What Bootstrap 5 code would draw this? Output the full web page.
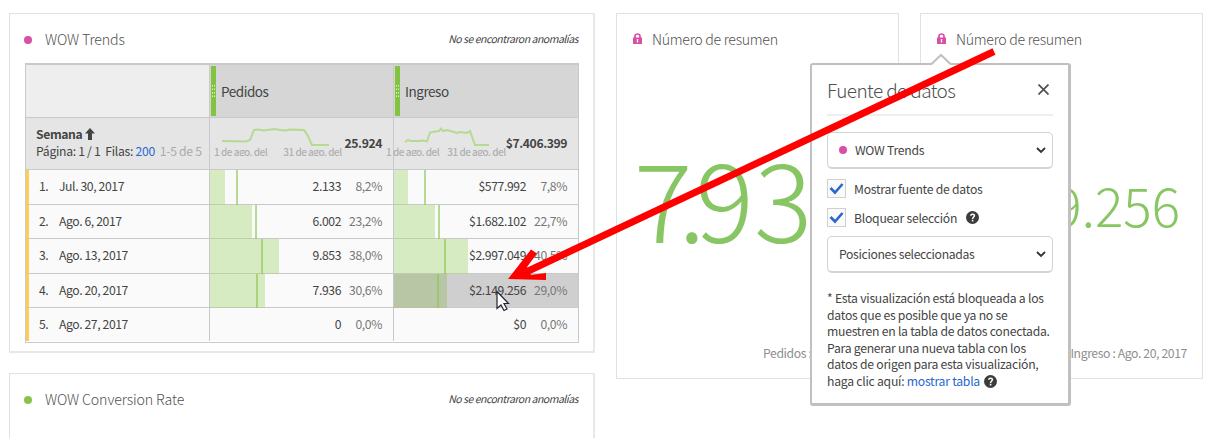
<!DOCTYPE html>
<html lang="es">
<head>
<meta charset="utf-8">
<meta name="viewport" content="width=device-width, initial-scale=1">
<title>WOW Trends</title>
<link href="https://cdn.jsdelivr.net/npm/bootstrap@5.3.0/dist/css/bootstrap.min.css" rel="stylesheet">
<style>
body{font-family:"Noto Sans CJK SC","Noto Sans",sans-serif;font-size:12.2px;letter-spacing:-.25px;line-height:16px;color:#444;background:#fff}
.workspace{height:438px;padding:13px 10px 0 9px;gap:21px}
.left-col{width:586px;gap:20px}
.panel{border:1px solid #e1e1e1;background:#fff}
.panel.trends,.panel.rate{padding:0 15px;border-right-width:2px;border-right-color:#e8e8e8}
.panel.trends{height:340px;border-bottom:2px solid #e8e8e8}
.panel.rate{height:120px}
.panel.summary{width:283px;height:366px}
.panel-head{height:49px}
.ttl{font-size:14.2px;font-weight:300;color:#505050;letter-spacing:-.12px}
.summary .ttl{letter-spacing:-.3px;padding-left:10px}
.dot{width:8px;height:8px;border-radius:50%;background:#d84fa4}
.dot.green{background:#8bc34a}
.trends .dot,.rate .dot{margin:3px 13px 0 -1px}
.note{font-size:10.5px;font-style:italic;letter-spacing:-.5px}
.grid-tbl{border:1px solid #c9c9c9;border-top-width:2px;height:280px;width:554px;letter-spacing:-.4px}
.g-row{display:grid;grid-template-columns:183px 184px minmax(0,1fr)}
.g-row>div{border-bottom:1px solid #c9c9c9;min-width:0}
.g-row>div+div{border-left:1px solid #c9c9c9}
.g-head{height:52px;font-size:13.5px;letter-spacing:-.45px;line-height:52px;background:#d6d6d6}
.g-head>div:first-child{background:#eee}
.g-head span{padding-left:5px}
.handle{width:5px;margin:1px 0 0 1px;background:#82c341}
.g-sum{height:53px;background:#e5e5e5}
.g-sum b{font-weight:700}
.dim{padding:9px 0 0 10px}
.dim svg{vertical-align:-1px}
.dim .pages{padding-top:1px;letter-spacing:-.3px}
.pager{color:#aaa}
.sumv{padding:18px 11px 0 0;flex-shrink:0}
.trend-b{margin-left:-12px}
.spark-lbl{font-size:10px;font-weight:500;letter-spacing:-.5px;line-height:12px;height:10px;overflow:hidden;color:#b0b0b0;white-space:nowrap}
.g-data{height:34.6px;background:#fafafa}
.g-data:last-child{height:33px}
.g-data:last-child>div{border-bottom:0}
.g-data>div:first-child{border-left:3px solid #fc5;padding-bottom:1px}
.num-i{width:20px;padding-left:10px}
.date{padding-left:10px}
.cell{position:relative;line-height:32px;text-align:right;white-space:nowrap}
.cell .fill{position:absolute;left:0;top:0;bottom:-1px;background:rgba(169,216,120,.43)}
.cell .tick{position:absolute;top:0;bottom:-1px;width:2px;background:rgba(139,200,80,.62)}
.cell span{position:relative}
.cell .pct{display:inline-block;width:52px;padding-right:11px;color:#777}
.cell.hot{background:#cfcfcf}
.cell.hot .fill{background:rgba(140,180,90,.35)}
.big{color:#88c563;font-weight:300;white-space:nowrap;line-height:1;letter-spacing:0}
.b1{font-size:109px;padding:0 0 18px 17px}
.b1 .k7{letter-spacing:-14px}
.b1 .kd{letter-spacing:-10px}
.b2{font-size:53px;padding:0 22px 0 0}
.foot{color:#8e8e8e;letter-spacing:-.38px;padding:0 15px 17px}
.pop{position:absolute;left:810px;top:63px;width:261px;height:343px;background:#fff;border:2px solid #c0c0c0;border-width:2px 3px 3px 2px;border-radius:3px;padding:0 15px;z-index:2}
.pop-tip{position:absolute;left:118px;top:-12px}
.pop-head{height:51px;border-bottom:2px solid #eee}
.pop-head h5{font-size:19px;font-weight:300;line-height:26px;color:#505050;letter-spacing:-.6px}
.sel{width:226px;height:37px;border:1px solid #d3d3d3;border-bottom-width:2px;border-radius:5px;padding:0 6px 0 11px}
.chk{margin-top:10px}
.s2{margin-top:9px;letter-spacing:-.33px}
.box{width:19px;height:19px;border:1px solid #d0d0d0;background:#fafafa}
.help{width:13px;height:13px;margin-left:9px}
.expl{line-height:16.5px;white-space:nowrap;padding-top:1px}
.expl .help{margin-left:2px;vertical-align:-2px}
.lnk{color:#2767cf}
.overlay{position:absolute;left:0;top:0;z-index:3;pointer-events:none}
</style>
</head>
<body class="overflow-hidden position-relative">
<main class="workspace d-flex align-items-start overflow-hidden">
  <div class="left-col d-flex flex-column flex-shrink-0">
    <section class="panel trends">
      <header class="panel-head d-flex align-items-center">
        <span class="dot"></span><span class="ttl">WOW Trends</span>
        <span class="note ms-auto">No se encontraron anomalías</span>
      </header>
      <div class="grid-tbl">
        <div class="g-row g-head">
          <div></div>
          <div class="d-flex"><svg class="handle" width="5" height="50"><path d="M1.500 19v13M3.500 19v13" stroke="#d9efc0" stroke-dasharray="1.500 2"/></svg><span>Pedidos</span></div>
          <div class="d-flex"><svg class="handle" width="5" height="50"><path d="M1.500 19v13M3.500 19v13" stroke="#d9efc0" stroke-dasharray="1.500 2"/></svg><span>Ingreso</span></div>
        </div>
        <div class="g-row g-sum">
          <div class="dim text-nowrap">
            <div><b>Semana</b> <svg width="10" height="12" viewBox="0 0 10 12"><path d="M5 0 10 5.500H7V12H3V5.500H0Z" fill="#444"/></svg></div>
            <div class="pages">Página: 1 / 1 &nbsp;Filas: <span class="lnk">200</span> &nbsp;<span class="pager">1-5 de 5</span></div>
          </div>
          <div class="d-flex justify-content-between">
            <div class="ps-1 pt-2">
              <svg class="d-block ms-2" width="110" height="21" viewBox="0 0 110 21"><path d="M0 16 24 16.500 28 15 32 5 36 4.500 42 5.500 52 4 58 5 64 5.500 68 4.500 82 5 86 11 90 20H107" fill="none" stroke="#b5da92" stroke-width="2"/></svg>
              <div class="spark-lbl"><span>1 de ago. del</span><span class="ms-3">31 de ago. del</span></div>
            </div>
            <b class="sumv">25.924</b>
          </div>
          <div class="d-flex justify-content-between">
            <div class="trend-b ps-1 pt-2">
              <svg class="d-block" width="110" height="21" viewBox="-19 0 110 21"><path d="M0 17 3 15 6 16 14 16 19 15.500 22 16.500 25 7.500 30 6.500 34 6 36 3.500 38 6 42 5 49 7 52 8 55 7 62 8 65 6 70 20H84" fill="none" stroke="#b5da92" stroke-width="2"/></svg>
              <div class="spark-lbl"><span>1 de ago. del</span><span class="ms-2">31 de ago. del</span></div>
            </div>
            <b class="sumv">$7.406.399</b>
          </div>
        </div>
        <div id="rows"></div>
      </div>
    </section>
    <section class="panel rate">
      <header class="panel-head d-flex align-items-center">
        <span class="dot green"></span><span class="ttl">WOW Conversion Rate</span>
        <span class="note ms-auto">No se encontraron anomalías</span>
      </header>
    </section>
  </div>
  <section class="panel summary d-flex flex-column flex-shrink-0">
    <header class="panel-head d-flex align-items-center px-3 flex-shrink-0">
      <svg width="9" height="11" viewBox="0 0 9 11"><path d="M2 5V3.200a2.500 2.200 0 0 1 5 0V5" fill="none" stroke="#d84fa4" stroke-width="1.700"/><path d="M0 4.500H9V11H0Z" fill="#d84fa4"/><path d="M4.500 6v3.500" stroke="#fff" stroke-width="1.300"/></svg>
      <span class="ttl">Número de resumen</span>
    </header>
    <div class="big b1 flex-grow-1 d-flex align-items-center"><span class="k7">7</span><span class="kd">.</span>936</div>
    <div class="foot text-end">Pedidos : Ago. 20, 2017</div>
  </section>
  <section class="panel summary d-flex flex-column flex-shrink-0">
    <header class="panel-head d-flex align-items-center px-3 flex-shrink-0">
      <svg width="9" height="11" viewBox="0 0 9 11"><path d="M2 5V3.200a2.500 2.200 0 0 1 5 0V5" fill="none" stroke="#d84fa4" stroke-width="1.700"/><path d="M0 4.500H9V11H0Z" fill="#d84fa4"/><path d="M4.500 6v3.500" stroke="#fff" stroke-width="1.300"/></svg>
      <span class="ttl">Número de resumen</span>
    </header>
    <div class="big b2 flex-grow-1 d-flex align-items-center justify-content-end">$2.149.256</div>
    <div class="foot text-end">Ingreso : Ago. 20, 2017</div>
  </section>
</main>

<aside class="pop">
  <svg class="pop-tip" width="22" height="13" viewBox="0 0 22 13"><path d="M0 13 1 12 11 2 21 12 22 13Z" fill="#fff"/><path d="M1 11.500 11 2 21 11.500" fill="none" stroke="#c0c0c0" stroke-width="2"/></svg>
  <div class="pop-head d-flex align-items-center justify-content-between">
    <h5 class="m-0">Fuente de datos</h5>
    <svg width="11" height="11" viewBox="0 0 11 11" class="me-1"><path d="m.5.5 10 10m0-10-10 10" stroke="#505050" stroke-width="1.700"/></svg>
  </div>
  <div class="sel mt-3 d-flex align-items-center"><span class="dot me-2"></span>WOW Trends
    <svg class="ms-auto" width="10" height="7" viewBox="0 0 10 7"><path d="m1 1 4 4 4-4" fill="none" stroke="#333" stroke-width="1.800"/></svg></div>
  <div class="d-flex align-items-center chk"><span class="box me-2"><svg class="d-block" width="17" height="17" viewBox="0 0 17 17"><path d="m2.500 8 4.500 4.500L14.500 4" fill="none" stroke="#2767cf" stroke-width="2.600"/></svg></span>Mostrar fuente de datos</div>
  <div class="d-flex align-items-center chk"><span class="box me-2"><svg class="d-block" width="17" height="17" viewBox="0 0 17 17"><path d="m2.500 8 4.500 4.500L14.500 4" fill="none" stroke="#2767cf" stroke-width="2.600"/></svg></span>Bloquear selección
    <svg class="help" viewBox="0 0 13 13"><circle cx="6.500" cy="6.500" r="6.500" fill="#3c3c3c"/><path d="M4.700 4.700c.2-2 3.900-1.900 3.700.1C8.300 6.100 6.600 6.100 6.600 7.900M6.600 8.800v1.600" fill="none" stroke="#fff" stroke-width="1.500"/></svg></div>
  <div class="sel s2 d-flex align-items-center">Posiciones seleccionadas
    <svg class="ms-auto" width="10" height="7" viewBox="0 0 10 7"><path d="m1 1 4 4 4-4" fill="none" stroke="#333" stroke-width="1.800"/></svg></div>
  <p class="expl mt-3 mb-0">* Esta visualización está bloqueada a los<br>datos que es posible que ya no se<br>muestren en la tabla de datos conectada.<br>Para generar una nueva tabla con los<br>datos de origen para esta visualización,<br>haga clic aquí: <span class="lnk">mostrar tabla</span>
    <svg class="help" viewBox="0 0 13 13"><circle cx="6.500" cy="6.500" r="6.500" fill="#3c3c3c"/><path d="M4.700 4.700c.2-2 3.900-1.900 3.700.1C8.300 6.100 6.600 6.100 6.600 7.900M6.600 8.800v1.600" fill="none" stroke="#fff" stroke-width="1.500"/></svg></p>
</aside>

<svg class="overlay" width="1214" height="438" viewBox="0 0 1214 438">
  <path d="M994 51.500 524 273" stroke="#f00" stroke-width="7" fill="none"/>
  <path d="M508 279 531 249.500 537 253.500 527 267 531 275 546 273V280Z" fill="#f00"/>
  <path d="M497 291.500v17l4-3.500 3 5.500 3-1.500-3-5.500h4.500Z" fill="#fff" stroke="#223" stroke-width="1.200"/>
</svg>
<script src="https://cdn.jsdelivr.net/npm/bootstrap@5.3.0/dist/js/bootstrap.bundle.min.js"></script>
<script>
const data=[
 ["Jul. 30, 2017",["2.133","8,2%",15,25.5],["$577.992","7,8%",14,30]],
 ["Ago. 6, 2017",["6.002","23,2%",42,45],["$1.682.102","22,7%",41,44]],
 ["Ago. 13, 2017",["9.853","38,0%",69,51],["$2.997.049","40,5%",74,50]],
 ["Ago. 20, 2017",["7.936","30,6%",55,46],["$2.149.256","29,0%",53,43]],
 ["Ago. 27, 2017",["0","0,0%",0,0],["$0","0,0%",0,0]]];
const cell=(c,hot)=>`<div class="cell${hot?" hot":""}">${c[2]?`<i class="fill" style="width:${c[2]}px"></i><i class="tick" style="left:${c[3]}px"></i>`:""}<span>${c[0]}</span><span class="pct">${c[1]}</span></div>`;
document.getElementById("rows").innerHTML=data.map((r,i)=>`<div class="g-row g-data"><div class="d-flex align-items-center"><span class="num-i">${i+1}.</span><span class="date">${r[0]}</span></div>${cell(r[1])}${cell(r[2],i===3)}</div>`).join("");
</script>
</body>
</html>
